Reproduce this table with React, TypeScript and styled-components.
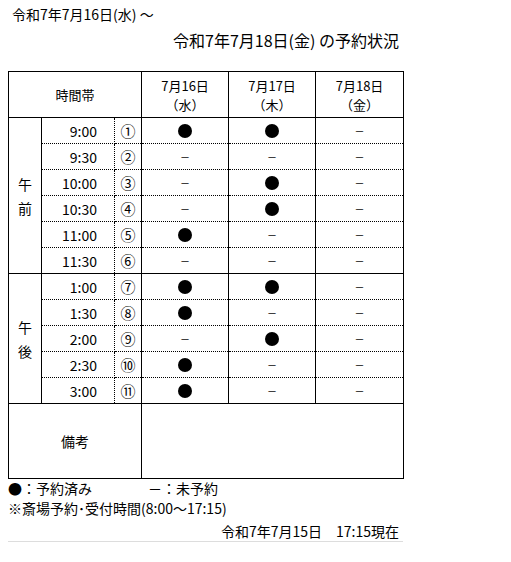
import React from "react";
import styled, { createGlobalStyle } from "styled-components";

const GlobalStyle = createGlobalStyle`
    body {
        margin: 0;
        background: #fff;
        color: #000;
        font-family: "Noto Sans CJK JP", sans-serif;
    }
`;

const Page = styled.div`
    width: 395px;
    padding: 4px 8px 0 8px;
`;

const TitleFrom = styled.div`
    font-size: 14px;
    line-height: 20px;
    padding-left: 4px;
`;

const TitleTo = styled.div`
    font-size: 16px;
    line-height: 22px;
    margin-top: 5px;
    text-align: right;
    padding-right: 4px;
`;

const Table = styled.table`
    margin-top: 20px;
    width: 395px;
    border-collapse: collapse;
    table-layout: fixed;
    font-size: 14px;
    border: 1px solid #000;
`;

const Th = styled.th`
    font-weight: normal;
    font-size: 13px;
    border: 1px solid #000;
    height: 45px;
    padding: 0;
    line-height: 19px;
    text-align: center;
`;

const Td = styled.td<{ $last?: boolean }>`
    padding: 0;
    border-left: 1px solid #000;
    border-right: 1px solid #000;
    border-bottom: 1px ${(p) => (p.$last ? "solid" : "dotted")} #000;
`;

const Cell = styled.div<{ $align?: "right" }>`
    height: 25px;
    display: flex;
    align-items: center;
    justify-content: ${(p) => (p.$align === "right" ? "flex-end" : "center")};
    padding-right: ${(p) => (p.$align === "right" ? "17px" : "0")};
    line-height: 1;
    overflow: hidden;
`;

const Half = styled(Td)`
    text-align: center;
    vertical-align: middle;
    line-height: 24px;
    border-bottom: 1px solid #000;
`;

const Time = styled(Td)`
    border-right: 1px dotted #000;
`;

const Num = styled(Td)`
    border-left: 1px dotted #000;
    font-size: 15px;
`;

const Dot = styled.span`
    display: block;
    width: 14px;
    height: 14px;
    border-radius: 50%;
    background: #000;
`;

const Dash = styled.span`
    font-size: 10px;
`;

const Remark = styled.td`
    height: 74px;
    padding: 0;
    text-align: center;
    border: 1px solid #000;
`;

const Legend = styled.div`
    font-size: 14px;
    line-height: 20px;
    margin-top: -1px;
`;

const LegendRow = styled.div`
    display: flex;
`;

const LegendItem = styled.span`
    width: 140px;
`;

const AsOf = styled.div`
    font-size: 14px;
    line-height: 20px;
    text-align: right;
    padding-right: 4px;
    margin-top: 3px;
    border-bottom: 1px solid #ddd;
`;

type Row = { time: string; num: string; marks: boolean[] };

const am: Row[] = [
    { time: "9:00", num: "①", marks: [true, true, false] },
    { time: "9:30", num: "②", marks: [false, false, false] },
    { time: "10:00", num: "③", marks: [false, true, false] },
    { time: "10:30", num: "④", marks: [false, true, false] },
    { time: "11:00", num: "⑤", marks: [true, false, false] },
    { time: "11:30", num: "⑥", marks: [false, false, false] },
];

const pm: Row[] = [
    { time: "1:00", num: "⑦", marks: [true, true, false] },
    { time: "1:30", num: "⑧", marks: [true, false, false] },
    { time: "2:00", num: "⑨", marks: [false, true, false] },
    { time: "2:30", num: "⑩", marks: [true, false, false] },
    { time: "3:00", num: "⑪", marks: [true, false, false] },
];

const Group = ({ label, rows }: { label: string[]; rows: Row[] }) => (
    <>
        {rows.map((r, i) => {
            const last = i === rows.length - 1;
            return (
                <tr key={r.time}>
                    {i === 0 && (
                        <Half rowSpan={rows.length}>
                            {label[0]}
                            <br />
                            {label[1]}
                        </Half>
                    )}
                    <Time $last={last}>
                        <Cell $align="right">{r.time}</Cell>
                    </Time>
                    <Num $last={last}>
                        <Cell>{r.num}</Cell>
                    </Num>
                    {r.marks.map((m, j) => (
                        <Td key={j} $last={last}>
                            <Cell>{m ? <Dot aria-label="●" /> : <Dash>－</Dash>}</Cell>
                        </Td>
                    ))}
                </tr>
            );
        })}
    </>
);

const App = () => {
    return (
        <Page>
            <GlobalStyle />
            <TitleFrom>令和7年7月16日(水) ～</TitleFrom>
            <TitleTo>令和7年7月18日(金) の予約状況</TitleTo>
            <Table>
                <colgroup>
                    <col style={{ width: 33 }} />
                    <col style={{ width: 73 }} />
                    <col style={{ width: 27 }} />
                    <col style={{ width: 87 }} />
                    <col style={{ width: 87 }} />
                    <col style={{ width: 88 }} />
                </colgroup>
                <thead>
                    <tr>
                        <Th colSpan={3}>時間帯</Th>
                        <Th>
                            7月16日
                            <br />
                            （水）
                        </Th>
                        <Th>
                            7月17日
                            <br />
                            （木）
                        </Th>
                        <Th>
                            7月18日
                            <br />
                            （金）
                        </Th>
                    </tr>
                </thead>
                <tbody>
                    <Group label={["午", "前"]} rows={am} />
                    <Group label={["午", "後"]} rows={pm} />
                    <tr>
                        <Remark colSpan={3}>備考</Remark>
                        <Remark colSpan={3} />
                    </tr>
                </tbody>
            </Table>
            <Legend>
                <LegendRow>
                    <LegendItem>●：予約済み</LegendItem>
                    <span>－：未予約</span>
                </LegendRow>
                <div>※斎場予約･受付時間(8:00～17:15)</div>
            </Legend>
            <AsOf>令和7年7月15日　17:15現在</AsOf>
        </Page>
    );
};

export default App;
